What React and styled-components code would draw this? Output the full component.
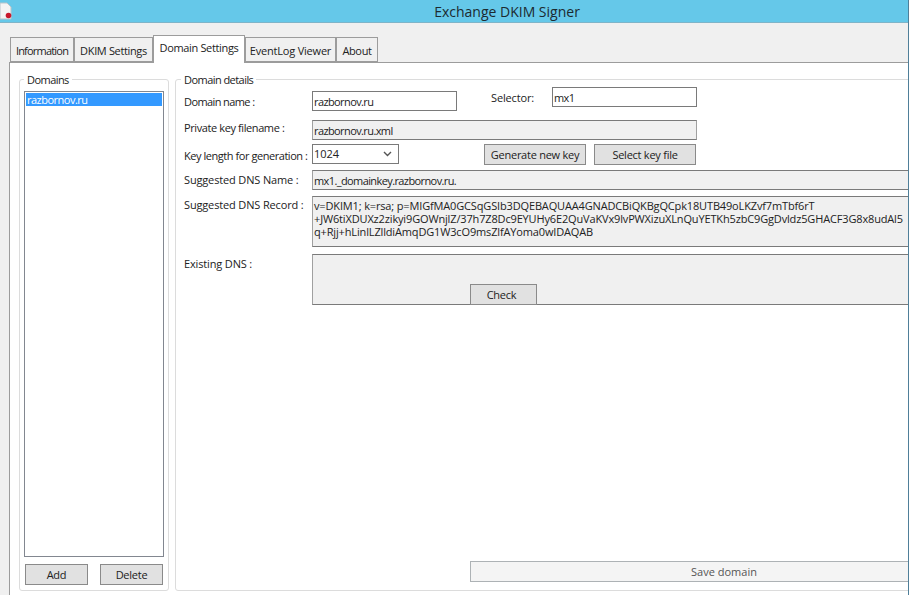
import React from "react";
import styled, { createGlobalStyle } from "styled-components";

const GlobalStyle = createGlobalStyle`
  html, body {
    margin: 0;
    padding: 0;
    background: #f0f0f0;
  }
  * {
    box-sizing: border-box;
  }
`;

const RECORD = `v=DKIM1; k=rsa; p=MIGfMA0GCSqGSIb3DQEBAQUAA4GNADCBiQKBgQCpk18UTB49oLKZvf7mTbf6rT
+JW6tiXDUXz2zikyi9GOWnjlZ/37h7Z8Dc9EYUHy6E2QuVaKVx9lvPWXizuXLnQuYETKh5zbC9GgDvldz5GHACF3G8x8udAl5
q+Rjj+hLinlLZlldiAmqDG1W3cO9msZlfAYoma0wIDAQAB`;

const tabs = [
  { name: "Information", width: 64, tracking: -0.8 },
  { name: "DKIM Settings", width: 79 },
  { name: "Domain Settings", width: 92, active: true },
  { name: "EventLog Viewer", width: 91, tracking: -0.2 },
  { name: "About", width: 42 },
];

const Window = styled.div`
  width: 909px;
  height: 595px;
  overflow: hidden;
  display: flex;
  flex-direction: column;
  background: #f0f0f0;
  border-right: 1px solid #4f7f99;
  font-family: "Open Sans", "Liberation Sans", sans-serif;
  font-size: 11px;
  color: #222;
`;

const TitleBar = styled.div`
  height: 23px;
  flex: none;
  display: flex;
  align-items: center;
  justify-content: center;
  background: #65c8e9;
  border-bottom: 1px solid #7fb4c8;
  font-size: 14px;
  color: #1c2a30;
  padding-left: 106px;
`;

const AppIcon = styled.svg`
  position: absolute;
  left: 0;
  top: 1px;
`;

const Body = styled.div`
  flex: 1;
  min-height: 0;
  display: flex;
  flex-direction: column;
  padding: 12px 0 0 9px;
`;

const TabStrip = styled.div`
  height: 27px;
  flex: none;
  display: flex;
  align-items: flex-end;
  padding-left: 1px;
  position: relative;
  z-index: 1;
`;

const Tab = styled.div`
  width: ${(p) => p.$width}px;
  height: ${(p) => (p.$active ? 28 : 25)}px;
  margin-bottom: ${(p) => (p.$active ? -1 : 0)}px;
  display: flex;
  align-items: center;
  justify-content: center;
  white-space: nowrap;
  letter-spacing: ${(p) => p.$tracking || -0.35}px;
  background: ${(p) => (p.$active ? "#fff" : "#f0f0f0")};
  border: 1px solid #9c9c9c;
  border-bottom: ${(p) => (p.$active ? "none" : "1px solid #9c9c9c")};
  padding: ${(p) => (p.$active ? "0 0 4px" : "1px 0 0")};
  font-size: 11px;
`;

const Panel = styled.div`
  flex: 1;
  min-height: 0;
  background: #fff;
  border-top: 1px solid #9c9c9c;
  border-left: 1px solid #9c9c9c;
  display: flex;
  gap: 6px;
  padding: 10px 0 4px 9px;
`;

const Group = styled.fieldset`
  margin: 0;
  min-width: 0;
  border: 1px solid #dcdcdc;
  border-radius: 3px;
  display: flex;
  flex-direction: column;
  flex: ${(p) => (p.$grow ? "1 0 760px" : "none")};
  width: ${(p) => (p.$grow ? "760px" : "150px")};
  padding: ${(p) => (p.$grow ? "0 0 8px 8px" : "0 4px 5px 4px")};
`;

const Legend = styled.legend`
  padding: 0 3px;
  margin-left: ${(p) => p.$left || 0}px;
  line-height: 13px;
  font-size: 11px;
  letter-spacing: -0.55px;
`;

const ListBox = styled.div`
  flex: 1;
  margin-top: 5px;
  background: #fff;
  border: 1px solid #828790;
  padding: 1px;
`;

const ListItem = styled.div`
  height: 13px;
  line-height: 14px;
  padding-left: 1px;
  color: #fff;
  letter-spacing: -0.5px;
  background: #3399ff;
`;

const ButtonRow = styled.div`
  display: flex;
  justify-content: space-between;
  padding: 7px 1px 0;
`;

const Button = styled.button`
  width: ${(p) => p.$width}px;
  height: 21px;
  flex: none;
  padding: 0;
  font: inherit;
  letter-spacing: -0.25px;
  color: #222;
  background: #e1e1e1;
  border: 1px solid #8a8a8a;
`;

const Row = styled.div`
  display: flex;
  align-items: flex-start;
  margin-top: ${(p) => p.$top}px;
`;

const Label = styled.div`
  width: 128px;
  flex: none;
  white-space: nowrap;
  padding-top: ${(p) => p.$top || 0}px;
  letter-spacing: ${(p) => p.$tracking || -0.15}px;
`;

const Field = styled.div`
  width: ${(p) => (p.$width ? `${p.$width}px` : "800px")};
  height: ${(p) => p.$height || 20}px;
  flex: none;
  padding: ${(p) => (p.$multi ? "2px 0 0 1px" : "0 1px")};
  display: ${(p) => (p.$multi ? "block" : "flex")};
  align-items: center;
  white-space: ${(p) => (p.$multi ? "pre" : "nowrap")};
  line-height: ${(p) => (p.$multi ? "13px" : "normal")};
  letter-spacing: ${(p) => (p.$multi ? -0.15 : -0.6)}px;
  background: ${(p) => (p.$readOnly ? "#f0f0f0" : "#fff")};
  border: 1px solid #7a7a7a;
  border-left-color: ${(p) => (p.$readOnly ? "#a0a0a0" : "#7a7a7a")};
  border-right-color: ${(p) => (p.$readOnly ? "#a0a0a0" : "#7a7a7a")};
`;

const SelectorGroup = styled.div`
  display: flex;
  align-items: flex-start;
  margin: -4px 0 0 34px;
`;

const SelectorLabel = styled.div`
  width: 61px;
  padding-top: 3px;
  letter-spacing: -0.15px;
`;

const Select = styled(Field)`
  justify-content: space-between;
  letter-spacing: 0;
  padding: 0 6px 1px 1px;
`;

const KeyButtons = styled.div`
  display: flex;
  gap: 8px;
  margin-left: 85px;
`;

const DnsBox = styled.div`
  position: relative;
`;

const CheckButton = styled(Button)`
  position: absolute;
  left: 158px;
  bottom: 0;
  padding-right: 4px;
`;

const SaveRow = styled.div`
  margin: auto 0 0 286px;
`;

const SaveButton = styled.button`
  width: 508px;
  height: 21px;
  padding: 0;
  font: inherit;
  color: #555;
  background: #f4f4f4;
  border: 1px solid #adb2b5;
`;

export default function App() {
  return (
    <>
      <GlobalStyle />
      <Window>
        <TitleBar>
          <AppIcon width="14" height="20" viewBox="0 0 14 20">
            <path d="M0 2h7l4 4v12H0z" fill="#f4f4f4" stroke="#b9c4c9" strokeWidth="1" />
            <circle cx="8.5" cy="14.5" r="2.8" fill="#c8182c" />
          </AppIcon>
          Exchange DKIM Signer
        </TitleBar>
        <Body>
          <TabStrip>
            {tabs.map((t) => (
              <Tab key={t.name} $width={t.width} $active={t.active} $tracking={t.tracking}>
                {t.name}
              </Tab>
            ))}
          </TabStrip>
          <Panel>
            <Group>
              <Legend>Domains</Legend>
              <ListBox>
                <ListItem>razbornov.ru</ListItem>
              </ListBox>
              <ButtonRow>
                <Button $width={63}>Add</Button>
                <Button $width={63}>Delete</Button>
              </ButtonRow>
            </Group>
            <Group $grow>
              <Legend $left={-3}>Domain details</Legend>
              <Row $top={5}>
                <Label $top={3} $tracking={-0.6}>Domain name :</Label>
                <Field $width={145}>razbornov.ru</Field>
                <SelectorGroup>
                  <SelectorLabel>Selector:</SelectorLabel>
                  <Field $width={145}>mx1</Field>
                </SelectorGroup>
              </Row>
              <Row $top={9}>
                <Label $tracking={-0.4}>Private key filename :</Label>
                <Field $width={385} $readOnly>razbornov.ru.xml</Field>
              </Row>
              <Row $top={4}>
                <Label $top={4} $tracking={-0.45}>Key length for generation :</Label>
                <Select $width={87}>
                  1024
                  <svg width="9" height="6" viewBox="0 0 9 6">
                    <path d="M1 1l3.5 3.5L8 1" fill="none" stroke="#555" strokeWidth="1.4" />
                  </svg>
                </Select>
                <KeyButtons>
                  <Button $width={102}>Generate new key</Button>
                  <Button $width={102}>Select key file</Button>
                </KeyButtons>
              </Row>
              <Row $top={5}>
                <Label $top={2}>Suggested DNS Name :</Label>
                <Field $readOnly>mx1._domainkey.razbornov.ru.</Field>
              </Row>
              <Row $top={6}>
                <Label $top={1}>Suggested DNS Record :</Label>
                <Field $readOnly $multi $height={51}>{RECORD}</Field>
              </Row>
              <Row $top={7}>
                <Label $top={2}>Existing DNS :</Label>
                <DnsBox>
                  <Field $readOnly $height={51} />
                  <CheckButton $width={67}>Check</CheckButton>
                </DnsBox>
              </Row>
              <SaveRow>
                <SaveButton>Save domain</SaveButton>
              </SaveRow>
            </Group>
          </Panel>
        </Body>
      </Window>
    </>
  );
}
